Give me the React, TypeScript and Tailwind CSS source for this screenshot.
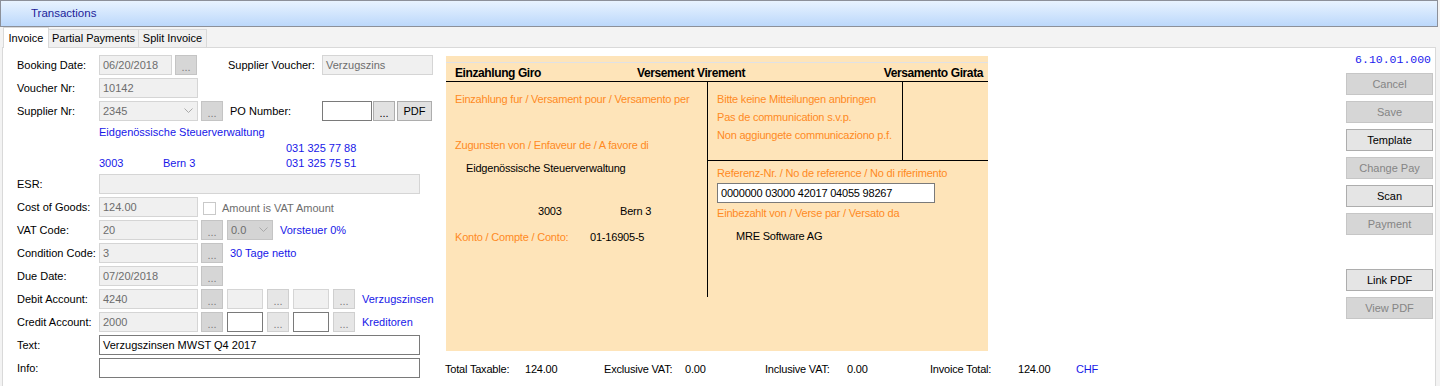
import React from "react"

const ORANGE = "text-[#ff8a1f]"

type InputProps = { value?: string; w: string; on?: boolean }

function Input({ value = "", w, on }: InputProps) {
  return (
    <div
      className={`${w} h-[20px] shrink-0 flex items-center px-[3px] border ${
        on ? "bg-white border-[#7a7a7a] text-black" : "bg-[#f0f0f0] border-[#d5d5d5] text-[#6d6d6d]"
      }`}
    >
      {value}
    </div>
  )
}

function Dots({ on, dark }: { on?: boolean; dark?: boolean }) {
  const cls = dark
    ? "bg-[#d6d6d6] border-[#c4c4c4] text-[#7d7d7d]"
    : on
    ? "bg-[#e1e1e1] border-[#adadad] text-black"
    : "bg-[#e6e6e6] border-[#cfcfcf] text-[#7d7d7d]"
  return (
    <div className={`w-[22px] h-[20px] shrink-0 border flex items-end justify-center pb-[1px] leading-none ${cls}`}>
      ...
    </div>
  )
}

function Combo({ value, w, dark }: { value: string; w: string; dark?: boolean }) {
  return (
    <div
      className={`${w} h-[20px] shrink-0 flex items-center justify-between pl-[3px] pr-[4px] border text-[#6d6d6d] ${
        dark ? "bg-[#d4d4d4] border-[#c4c4c4]" : "bg-[#f0f0f0] border-[#d5d5d5]"
      }`}
    >
      <span>{value}</span>
      <svg width="9" height="6" viewBox="0 0 9 6" fill="none">
        <path d="M0.5 0.5 L4.5 4.5 L8.5 0.5" stroke="#a9a9a9" strokeWidth="1" />
      </svg>
    </div>
  )
}

function Row({ label, children }: { label: string; children?: React.ReactNode }) {
  return (
    <div className="flex items-center h-[20px]">
      <span className="w-[82px] shrink-0">{label}</span>
      {children}
    </div>
  )
}

function SideButton({ label, on }: { label: string; on?: boolean }) {
  return (
    <div
      className={`w-[87px] h-[22px] border flex items-center justify-center ${
        on ? "bg-[#e5e5e5] border-[#adadad] text-black" : "bg-[#d6d6d6] border-[#c6c6c6] text-[#858585]"
      }`}
    >
      {label}
    </div>
  )
}

function Blue({ children, className = "" }: { children: React.ReactNode; className?: string }) {
  return <span className={`text-[#1717e8] ${className}`}>{children}</span>
}

function InvoiceForm() {
  return (
    <div className="w-[443px] shrink-0 pl-[14px] pt-[7px] flex flex-col gap-[3px]">
      <Row label="Booking Date:">
        <Input w="w-[73px]" value="06/20/2018" />
        <div className="ml-[3px]"><Dots dark /></div>
        <span className="ml-[31px] w-[94px] shrink-0">Supplier Voucher:</span>
        <Input w="w-[111px]" value="Verzugszins" />
      </Row>
      <Row label="Voucher Nr:">
        <Input w="w-[99px]" value="10142" />
      </Row>
      <Row label="Supplier Nr:">
        <Combo w="w-[99px]" value="2345" />
        <div className="ml-[3px]"><Dots dark /></div>
        <span className="ml-[7px] w-[92px] shrink-0">PO Number:</span>
        <Input w="w-[50px]" on />
        <div className="ml-[1px]"><Dots on /></div>
        <div className="ml-[2px] w-[35px] h-[20px] border border-[#adadad] bg-[#e1e1e1] flex items-center justify-center">PDF</div>
      </Row>
      <div className="h-[47px] pl-[82px] flex flex-col">
        <div className="h-[16px] flex items-center"><Blue>Eidgenössische Steuerverwaltung</Blue></div>
        <div className="h-[16px] flex items-center pl-[187px]"><Blue>031 325 77 88</Blue></div>
        <div className="h-[15px] flex items-center">
          <Blue className="w-[64px]">3003</Blue>
          <Blue className="w-[123px]">Bern 3</Blue>
          <Blue>031 325 75 51</Blue>
        </div>
      </div>
      <Row label="ESR:">
        <Input w="w-[321px]" />
      </Row>
      <Row label="Cost of Goods:">
        <Input w="w-[99px]" value="124.00" />
        <div className="ml-[5px] mt-[3px] w-[13px] h-[13px] bg-white border border-[#c9c9c9]" />
        <span className="ml-[6px] mt-[3px] text-[#6d6d6d]">Amount is VAT Amount</span>
      </Row>
      <Row label="VAT Code:">
        <Input w="w-[99px]" value="20" />
        <div className="ml-[3px]"><Dots dark /></div>
        <div className="ml-[4px]"><Combo w="w-[46px]" value="0.0" dark /></div>
        <Blue className="ml-[7px]">Vorsteuer 0%</Blue>
      </Row>
      <Row label="Condition Code:">
        <Input w="w-[99px]" value="3" />
        <div className="ml-[3px]"><Dots dark /></div>
        <Blue className="ml-[7px]">30 Tage netto</Blue>
      </Row>
      <Row label="Due Date:">
        <Input w="w-[99px]" value="07/20/2018" />
        <div className="ml-[3px]"><Dots dark /></div>
      </Row>
      <Row label="Debit Account:">
        <Input w="w-[99px]" value="4240" />
        <div className="ml-[3px]"><Dots dark /></div>
        <div className="ml-[4px]"><Input w="w-[36px]" /></div>
        <div className="ml-[4px]"><Dots /></div>
        <div className="ml-[4px]"><Input w="w-[36px]" /></div>
        <div className="ml-[4px]"><Dots /></div>
        <Blue className="ml-[7px]">Verzugszinsen</Blue>
      </Row>
      <Row label="Credit Account:">
        <Input w="w-[99px]" value="2000" />
        <div className="ml-[3px]"><Dots dark /></div>
        <div className="ml-[4px]"><Input w="w-[36px]" on /></div>
        <div className="ml-[4px]"><Dots /></div>
        <div className="ml-[4px]"><Input w="w-[36px]" on /></div>
        <div className="ml-[4px]"><Dots /></div>
        <Blue className="ml-[7px]">Kreditoren</Blue>
      </Row>
      <Row label="Text:">
        <Input w="w-[321px]" value="Verzugszinsen MWST Q4 2017" on />
      </Row>
      <Row label="Info:">
        <Input w="w-[321px]" on />
      </Row>
    </div>
  )
}

function Slip() {
  return (
    <div className="w-[542px] h-[295px] bg-[#fee4b9] pt-[6px] flex flex-col tracking-[-0.2px]">
      <div className="h-[20px] border-t border-[#dfe1e6] border-b border-b-black flex items-center pl-[9px] pr-[5px] pt-[1px] font-bold text-[12px] tracking-[-0.4px]">
        <span className="w-[182px]">Einzahlung Giro</span>
        <span>Versement Virement</span>
        <span className="ml-auto">Versamento Girata</span>
      </div>
      <div className="flex h-[215px]">
        <div className="w-[262px] border-r border-black flex flex-col pl-[9px] pt-[9px]">
          <div className={`h-[16px] flex items-center ${ORANGE}`}>Einzahlung fur / Versament pour / Versamento per</div>
          <div className={`h-[16px] mt-[30px] flex items-center ${ORANGE}`}>Zugunsten von / Enfaveur de / A favore di</div>
          <div className="h-[16px] mt-[7px] flex items-center pl-[11px]">Eidgenössische Steuerverwaltung</div>
          <div className="h-[16px] mt-[27px] flex items-center pl-[83px]">
            <span className="w-[82px]">3003</span>
            <span>Bern 3</span>
          </div>
          <div className="h-[16px] mt-[10px] flex items-center">
            <span className={`w-[135px] ${ORANGE}`}>Konto / Compte / Conto:</span>
            <span>01-16905-5</span>
          </div>
        </div>
        <div className="flex-1 flex flex-col">
          <div className="h-[79px] border-b border-black flex">
            <div className="w-[195px] border-r border-black pl-[9px] pt-[8px] flex flex-col">
              <div className={`h-[18px] flex items-center ${ORANGE}`}>Bitte keine Mitteilungen anbringen</div>
              <div className={`h-[18px] flex items-center ${ORANGE}`}>Pas de communication s.v.p.</div>
              <div className={`h-[18px] flex items-center ${ORANGE}`}>Non aggiungete communicaziono p.f.</div>
            </div>
          </div>
          <div className="pl-[9px] pt-[4px] flex flex-col">
            <div className={`h-[16px] flex items-center ${ORANGE}`}>Referenz-Nr. / No de reference / No di riferimento</div>
            <div className="mt-[2px] w-[218px] h-[20px] bg-white border border-[#7a7a7a] flex items-center px-[3px]">
              0000000 03000 42017 04055 98267
            </div>
            <div className={`h-[16px] mt-[2px] flex items-center ${ORANGE}`}>Einbezahlt von / Verse par / Versato da</div>
            <div className="h-[16px] mt-[7px] flex items-center pl-[19px]">MRE Software AG</div>
          </div>
        </div>
      </div>
    </div>
  )
}

function Totals() {
  return (
    <div className="h-[16px] mt-[10px] -ml-[1px] flex items-center tracking-[-0.2px]">
      <span className="w-[80px]">Total Taxable:</span>
      <span className="w-[79px]">124.00</span>
      <span className="w-[81px]">Exclusive VAT:</span>
      <span className="w-[80px]">0.00</span>
      <span className="w-[82px]">Inclusive VAT:</span>
      <span className="w-[83px]">0.00</span>
      <span className="w-[88px]">Invoice Total:</span>
      <span className="w-[58px]">124.00</span>
      <Blue>CHF</Blue>
    </div>
  )
}

export default function App() {
  return (
    <div className="w-[1440px] h-[386px] overflow-hidden bg-[#f3f3f3] font-['Liberation_Sans',Arial,sans-serif] text-[11px] text-black">
      <div className="w-[1438px] h-[27px] border border-[#8c9099] bg-gradient-to-b from-[#e8f3ff] to-[#bcd8fb] flex items-center pl-[30px] text-[#1d1d9a] text-[11.5px]">
        Transactions
      </div>
      <div className="h-[20px] flex items-end pl-[3px]">
        <div className="w-[46px] bg-white border border-b-0 border-[#d9d9d9] flex items-center justify-center relative z-10 -mb-[1px] h-[21px]">
          Invoice
        </div>
        <div className="w-[90px] h-[18px] bg-[#f0f0f0] border border-l-0 border-b-0 border-[#d9d9d9] flex items-center justify-center">
          Partial Payments
        </div>
        <div className="w-[68px] h-[18px] bg-[#f0f0f0] border border-l-0 border-b-0 border-[#d9d9d9] flex items-center justify-center">
          Split Invoice
        </div>
      </div>
      <div className="ml-[2px] w-[1434px] h-[340px] bg-white border border-[#d9d9d9] flex">
        <InvoiceForm />
        <div className="flex flex-col pt-[8px]">
          <Slip />
          <Totals />
        </div>
        <div className="flex-1" />
        <div className="w-[87px] mr-[2px] flex flex-col">
          <div className="mt-[4px] h-[16px] flex items-center justify-end pr-[2px] text-[#2020ee] font-['Liberation_Mono',monospace] text-[11.5px]">
            6.10.01.000
          </div>
          <div className="mt-[5px] flex flex-col gap-[6px]">
            <SideButton label="Cancel" />
            <SideButton label="Save" />
            <SideButton label="Template" on />
            <SideButton label="Change Pay" />
            <SideButton label="Scan" on />
            <SideButton label="Payment" />
            <div className="h-[22px]" />
            <SideButton label="Link PDF" on />
            <SideButton label="View PDF" />
          </div>
        </div>
      </div>
    </div>
  )
}
